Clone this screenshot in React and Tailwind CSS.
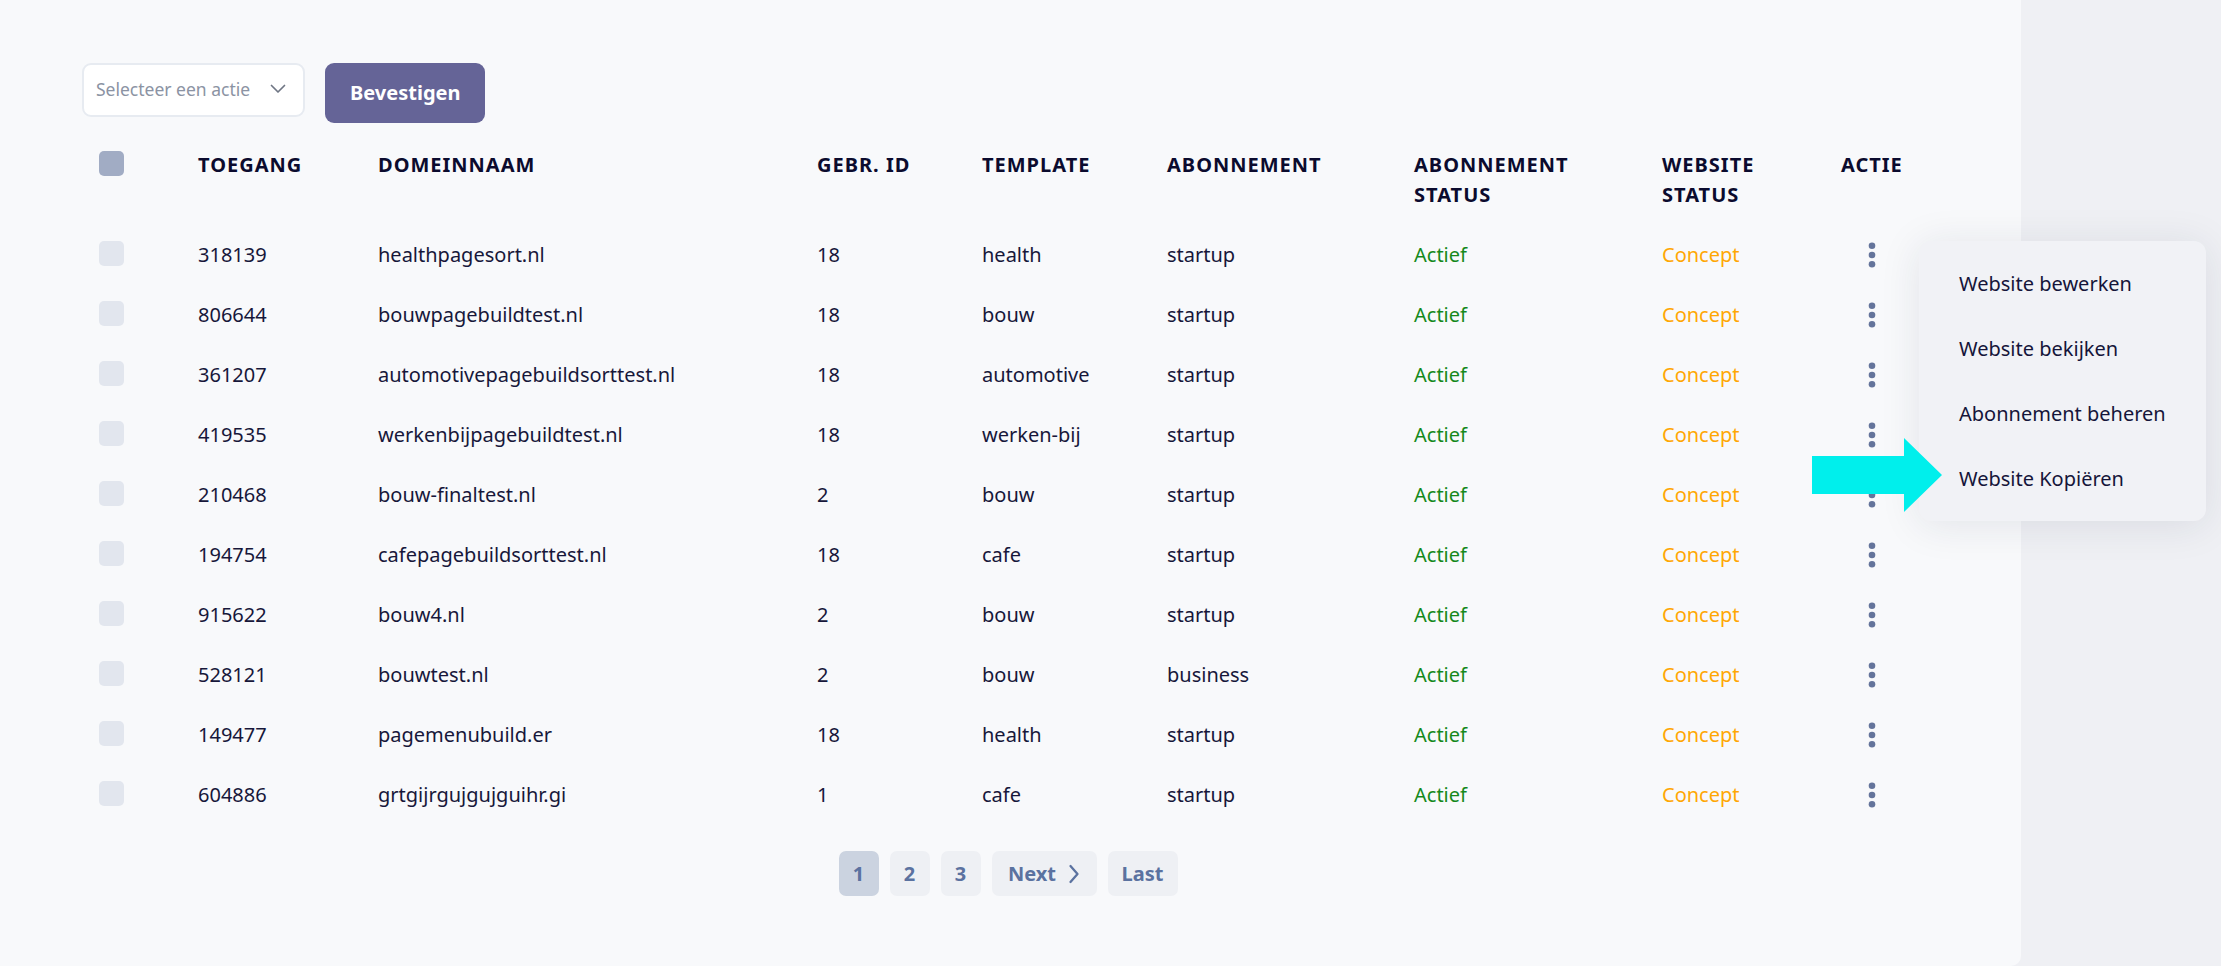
import React from "react";

const rows = [
  ["318139", "healthpagesort.nl", "18", "health", "startup"],
  ["806644", "bouwpagebuildtest.nl", "18", "bouw", "startup"],
  ["361207", "automotivepagebuildsorttest.nl", "18", "automotive", "startup"],
  ["419535", "werkenbijpagebuildtest.nl", "18", "werken-bij", "startup"],
  ["210468", "bouw-finaltest.nl", "2", "bouw", "startup"],
  ["194754", "cafepagebuildsorttest.nl", "18", "cafe", "startup"],
  ["915622", "bouw4.nl", "2", "bouw", "startup"],
  ["528121", "bouwtest.nl", "2", "bouw", "business"],
  ["149477", "pagemenubuild.er", "18", "health", "startup"],
  ["604886", "grtgijrgujgujguihr.gi", "1", "cafe", "startup"],
];

const gridCols =
  "grid grid-cols-[99px_180px_439px_165px_185px_247px_248px_179px_62px]";

function Dots() {
  return (
    <svg width="10" height="30" viewBox="0 0 10 30" className="block">
      <circle cx="5" cy="5.8" r="3.3" fill="#64749b" />
      <circle cx="5" cy="15" r="3.3" fill="#64749b" />
      <circle cx="5" cy="24.2" r="3.3" fill="#64749b" />
    </svg>
  );
}

export default function App() {
  return (
    <div className="relative w-[2221px] h-[966px] overflow-hidden bg-[#eff0f4] font-['Noto_Sans',sans-serif]">
      <div className="w-[2021px] h-[966px] bg-[#f8f9fb] rounded-br-[10px] pt-[63px] pl-[82px]">
        {/* Toolbar */}
        <div className="flex items-start gap-[20px]">
          <div className="w-[223px] h-[54px] bg-white border-2 border-[#e7ebf1] rounded-[9px] flex items-center justify-between pl-[12px] pr-[17px]">
            <span className="text-[17.5px] text-[#8b93a3] leading-none">Selecteer een actie</span>
            <svg width="16" height="10" viewBox="0 0 16 10" className="mb-[2px]">
              <polyline points="1.5,1.5 8,8 14.5,1.5" fill="none" stroke="#6f7684" strokeWidth="1.7" strokeLinecap="round" strokeLinejoin="round" />
            </svg>
          </div>
          <button className="h-[60px] px-[25px] bg-[#656497] rounded-[9px] text-white text-[20px] font-bold leading-none">
            Bevestigen
          </button>
        </div>

        {/* Table */}
        <div className="mt-[12px] pl-[17px] w-[1900px]">
          <div className={`${gridCols} py-[15px] text-[20px] leading-[30px] font-bold tracking-[0.05em] text-[#0b0b2e]`}>
            <div>
              <div className="mt-[1px] w-[25px] h-[25px] rounded-[5px] bg-[#a1acc4]" />
            </div>
            <div>TOEGANG</div>
            <div>DOMEINNAAM</div>
            <div>GEBR. ID</div>
            <div>TEMPLATE</div>
            <div>ABONNEMENT</div>
            <div>
              ABONNEMENT
              <br />
              STATUS
            </div>
            <div>
              WEBSITE
              <br />
              STATUS
            </div>
            <div>ACTIE</div>
          </div>

          {rows.map((r) => (
            <div
              key={r[0]}
              className={`${gridCols} py-[15px] text-[20px] leading-[30px] text-[#17173a]`}
            >
              <div>
                <div className="mt-[1px] w-[25px] h-[25px] rounded-[5px] bg-[#e2e6ee]" />
              </div>
              <div>{r[0]}</div>
              <div>{r[1]}</div>
              <div>{r[2]}</div>
              <div>{r[3]}</div>
              <div>{r[4]}</div>
              <div className="text-[#15891b]">Actief</div>
              <div className="text-[#ffa704]">Concept</div>
              <div className="flex justify-center">
                <Dots />
              </div>
            </div>
          ))}
        </div>

        {/* Pagination */}
        <div className="mt-[26px] flex justify-center gap-[11px] pr-[87px] text-[20px] font-bold text-[#5b72a0]">
          <div className="h-[45px] w-[40px] rounded-[7px] bg-[#cbd3e0] flex items-center justify-center">1</div>
          <div className="h-[45px] w-[40px] rounded-[7px] bg-[#eef0f4] flex items-center justify-center">2</div>
          <div className="h-[45px] w-[40px] rounded-[7px] bg-[#eef0f4] flex items-center justify-center">3</div>
          <div className="h-[45px] w-[105px] rounded-[7px] bg-[#eef0f4] flex items-center justify-center gap-[12px]">
            <span>Next</span>
            <svg width="12" height="20" viewBox="0 0 12 20">
              <polyline points="2.5,2 9.5,10 2.5,18" fill="none" stroke="#5b72a0" strokeWidth="2.3" strokeLinecap="round" strokeLinejoin="round" />
            </svg>
          </div>
          <div className="h-[45px] w-[70px] rounded-[7px] bg-[#eef0f4] flex items-center justify-center">Last</div>
        </div>
      </div>

      {/* Dropdown menu */}
      <div className="absolute left-[1919px] top-[241px] w-[287px] py-[10px] rounded-[12px] bg-[#f1f2f6] shadow-[0_4px_40px_rgba(30,35,70,0.10)] text-[20px] text-[#15153a]">
        <div className="h-[65px] px-[40px] flex items-center">Website bewerken</div>
        <div className="h-[65px] px-[40px] flex items-center">Website bekijken</div>
        <div className="h-[65px] px-[40px] flex items-center">Abonnement beheren</div>
        <div className="h-[65px] px-[40px] flex items-center">Website Kopiëren</div>
      </div>

      {/* Annotation arrow */}
      <svg
        className="absolute left-[1812px] top-[438px]"
        width="130"
        height="74"
        viewBox="0 0 130 74"
      >
        <polygon points="0,18 92,18 92,0 130,37 92,74 92,56 0,56" fill="#00efec" />
      </svg>
    </div>
  );
}
